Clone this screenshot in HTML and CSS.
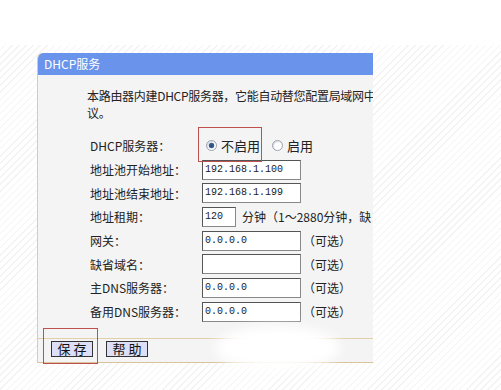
FILE: index.html
```html
<!DOCTYPE html>
<html lang="zh-CN">
<head>
  <meta charset="UTF-8" />
  <title>DHCP服务</title>
  <link rel="stylesheet" href="styles.css">
</head>
<body>
  <div class="page">
    <div class="panel">
      <div class="panel-head">DHCP服务</div>
      <div class="panel-body">
        <p class="intro">本路由器内建DHCP服务器，它能自动替您配置局域网中<br>议。</p>
        <div class="form">
          <div class="row">
            <span class="label">DHCP服务器：</span>
            <span class="radio checked"></span><span class="opt">不启用</span>
            <span class="radio"></span><span class="opt">启用</span>
          </div>
          <div class="row">
            <span class="label">地址池开始地址：</span>
            <span class="field">192.168.1.100</span>
          </div>
          <div class="row">
            <span class="label">地址池结束地址：</span>
            <span class="field">192.168.1.199</span>
          </div>
          <div class="row">
            <span class="label">地址租期：</span>
            <span class="field short">120</span>
            <span class="hint">分钟（1～2880分钟，缺</span>
          </div>
          <div class="row">
            <span class="label">网关：</span>
            <span class="field">0.0.0.0</span>
            <span class="note">（可选）</span>
          </div>
          <div class="row">
            <span class="label">缺省域名：</span>
            <span class="field"></span>
            <span class="note">（可选）</span>
          </div>
          <div class="row">
            <span class="label">主DNS服务器：</span>
            <span class="field">0.0.0.0</span>
            <span class="note">（可选）</span>
          </div>
          <div class="row">
            <span class="label">备用DNS服务器：</span>
            <span class="field">0.0.0.0</span>
            <span class="note">（可选）</span>
          </div>
        </div>
        <div class="actions">
          <button class="btn">保 存</button>
          <button class="btn">帮 助</button>
        </div>
      </div>
    </div>
  </div>

  <!-- annotations over the screenshot -->
  <div class="mark mark-radio"></div>
  <div class="mark mark-save"></div>
  <div class="smudge"></div>
</body>
</html>
```

FILE: styles.css
```css
body {
  margin: 0;
  height: 390px;
  overflow: hidden;
  position: relative;
  font-family: "Noto Sans CJK SC", "Liberation Sans", sans-serif;
  font-size: 12px;
  color: #222;
  background:
    linear-gradient(#fff, #fff) no-repeat top left / 100% 45px,
    repeating-linear-gradient(-45deg, #fff 0, #fff 4px, #f3f3f3 4px, #f3f3f3 5px);
}
.page {
  padding: 53px 0 0 37px;
}
.panel {
  width: 335px;
  overflow: hidden;
  white-space: nowrap;
  border-left: 1px solid #e0cc9c;
  border-bottom: 1px solid #d9c39a;
  border-top-left-radius: 6px;
}
.panel-head {
  height: 22px;
  line-height: 22px;
  padding-left: 6px;
  color: #fff;
  background: #6a94ec;
  font-size: 12px;
}
.panel-body {
  background: #f4f4f4;
}
.intro {
  margin: 0;
  padding: 12px 0 0 49px;
  line-height: 17px;
  letter-spacing: -0.3px;
}
.form {
  padding: 13px 0 0 52px;
}
.row {
  height: 23.7px;
  display: flex;
  align-items: center;
}
.label {
  width: 112px;
  flex: none;
}
.radio {
  width: 9px;
  height: 9px;
  border: 1px solid #9aa3b0;
  border-radius: 50%;
  background: #fff;
  margin: 0 4px 0 4px;
  flex: none;
  box-shadow: inset 1px 1px 1px #d8dbe0;
}
.radio.checked {
  background: radial-gradient(circle, #2b4a7a 0, #3e5f95 2.5px, #fff 3.2px);
}
.opt {
  font-size: 13px;
  margin-right: 8px;
}
.field {
  box-sizing: border-box;
  width: 99px;
  height: 20px;
  border: 1px solid #555;
  border-right-color: #888;
  border-bottom-color: #888;
  background: #fff;
  font-family: "Liberation Mono", monospace;
  font-size: 10px;
  line-height: 18px;
  padding-left: 2px;
  flex: none;
}
.field.short {
  width: 34px;
}
.hint {
  margin-left: 6px;
}
.note {
  margin-left: 2px;
}
.actions {
  margin-top: 14px;
  border-top: 1px solid #e0cfa8;
  padding: 2px 0 5px 13px;
  display: flex;
  gap: 13px;
}
.btn {
  width: 42px;
  height: 16px;
  padding: 0;
  border: 1px solid #333;
  background: #dcdff6;
  font-family: "Noto Sans CJK SC", sans-serif;
  font-size: 13px;
  line-height: 14px;
  color: #111;
}
.mark {
  position: absolute;
  border: 1px solid #c0504d;
}
.mark-radio {
  left: 198px;
  top: 127px;
  width: 62px;
  height: 33px;
}
.mark-save {
  left: 43px;
  top: 328px;
  width: 53px;
  height: 34px;
}
.smudge {
  position: absolute;
  left: 215px;
  top: 326px;
  width: 125px;
  height: 44px;
  border-radius: 50%;
  background: #fff;
  filter: blur(6px);
}
```
